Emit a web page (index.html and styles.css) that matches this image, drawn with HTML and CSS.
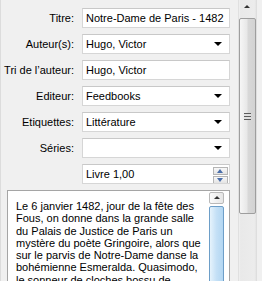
FILE: index.html
```html
<!DOCTYPE html>
<html lang="fr">
<head>
  <meta charset="UTF-8" />
  <title>Métadonnées du livre</title>
  <link rel="stylesheet" href="styles.css">
</head>
<body>
  <div class="window">
    <div class="panel">
      <div class="form">
        <label class="label">Titre:</label>
        <div class="field">Notre-Dame de Paris - 1482</div>

        <label class="label">Auteur(s):</label>
        <div class="field combo">Hugo, Victor<span class="arrow"></span></div>

        <label class="label">Tri de l’auteur:</label>
        <div class="field">Hugo, Victor</div>

        <label class="label">Editeur:</label>
        <div class="field combo">Feedbooks<span class="arrow"></span></div>

        <label class="label">Etiquettes:</label>
        <div class="field combo">Littérature<span class="arrow"></span></div>

        <label class="label">Séries:</label>
        <div class="field combo"><span class="arrow"></span></div>

        <span></span>
        <div class="field spin">Livre 1,00
          <div class="spin-buttons">
            <span class="spin-btn up"></span>
            <span class="spin-btn down"></span>
          </div>
        </div>
      </div>

      <div class="desc">
        <p class="desc-text">Le 6 janvier 1482, jour de la fête des<br>
          Fous, on donne dans la grande salle<br>
          du Palais de Justice de Paris un<br>
          mystère du poète Gringoire, alors que<br>
          sur le parvis de Notre-Dame danse la<br>
          bohémienne Esmeralda. Quasimodo,<br>
          le sonneur de cloches bossu de</p>
        <div class="mini-scroll">
          <span class="mini-up"></span>
          <span class="mini-thumb"></span>
        </div>
      </div>
    </div>

    <div class="vscroll">
      <div class="vs-up"></div>
      <div class="vs-thumb"><span class="grip"></span></div>
    </div>
  </div>
</body>
</html>
```

FILE: styles.css
```css
body {
  margin: 0;
  padding: 0;
  background-color: #f0f0f0;
  font-family: 'Liberation Sans', Arial, sans-serif;
  font-size: 11px;
  color: #000;
}

.window {
  display: flex;
  width: 262px;
  height: 281px;
  overflow: hidden;
}

.panel {
  width: 237px;
  border-left: 1px solid #dcdcdc;
  display: flex;
  flex-direction: column;
}

.form {
  display: grid;
  grid-template-columns: 73px 148px;
  grid-auto-rows: 20px;
  column-gap: 8px;
  row-gap: 6px;
  padding-top: 8px;
  align-items: center;
}

.label {
  text-align: right;
  white-space: nowrap;
}

.field {
  position: relative;
  height: 20px;
  box-sizing: border-box;
  background-color: #fff;
  border: 1px solid #d6d6d6;
  border-top-color: #c8c8c8;
  padding: 0 3px;
  line-height: 18px;
  white-space: nowrap;
  overflow: hidden;
}

.combo .arrow {
  position: absolute;
  right: 7px;
  top: 7px;
  width: 0;
  height: 0;
  border-left: 4px solid transparent;
  border-right: 4px solid transparent;
  border-top: 4px solid #000;
}

.spin-buttons {
  position: absolute;
  right: 1px;
  top: 2px;
  display: flex;
  flex-direction: column;
  gap: 1px;
}

.spin-btn {
  position: relative;
  width: 13px;
  height: 6px;
  border: 1px solid #b5b5b5;
  background: linear-gradient(#f8f8f8, #e4e4e4);
}

.spin-btn::after {
  content: "";
  position: absolute;
  left: 3px;
  width: 0;
  height: 0;
  border-left: 3px solid transparent;
  border-right: 3px solid transparent;
}

.spin-btn.up::after {
  top: 1px;
  border-bottom: 4px solid #4a6ea9;
}

.spin-btn.down::after {
  top: 1px;
  border-top: 4px solid #4a6ea9;
}

.desc {
  display: flex;
  margin: 6px 0 0 6px;
  width: 223px;
  flex: 1;
  box-sizing: border-box;
  background-color: #fff;
  border: 1px solid #a5a5a5;
  border-bottom: none;
}

.desc-text {
  flex: 1;
  margin: 0;
  padding: 9px 0 0 8px;
  font-size: 11px;
  line-height: 12.3px;
  white-space: nowrap;
  overflow: hidden;
}

.mini-scroll {
  width: 15px;
  margin: 1px 5px 0 0;
  display: flex;
  flex-direction: column;
  gap: 2px;
}

.mini-up {
  position: relative;
  height: 12px;
  box-sizing: border-box;
  border: 1px solid #b9b9b9;
  border-radius: 2px;
  background: linear-gradient(to right, #fbfbfb, #e6e6e6);
}

.mini-up::after {
  content: "";
  position: absolute;
  left: 4px;
  top: 3px;
  border-left: 3px solid transparent;
  border-right: 3px solid transparent;
  border-bottom: 3px solid #333;
}

.mini-thumb {
  flex: 1;
  border: 1px solid #6d9ec8;
  border-radius: 2px;
  background: linear-gradient(to right, #e6f3fc, #c4e0f6 50%, #b2d6f2);
}

.vscroll {
  width: 17px;
  display: flex;
  flex-direction: column;
  background: linear-gradient(to right, #f0f0f0, #e9e9e9 10%, #ececec 90%, #e4e4e4);
  border-left: 1px solid #e0e0e0;
  border-right: 1px solid #dedede;
}

.vs-up {
  position: relative;
  height: 18px;
}

.vs-up::after {
  content: "";
  position: absolute;
  left: 5px;
  top: 5px;
  border-left: 3px solid transparent;
  border-right: 3px solid transparent;
  border-bottom: 3px solid #333;
}

.vs-thumb {
  height: 196px;
  display: flex;
  align-items: center;
  justify-content: center;
  box-sizing: border-box;
  border: 1px solid #9e9e9e;
  border-radius: 2px;
  background: linear-gradient(to right, #f6f6f6, #e8e8e8 45%, #d8d8d8 55%, #d2d2d2);
}

.grip {
  width: 7px;
  height: 7px;
  background: repeating-linear-gradient(#5c5c5c 0, #5c5c5c 1px, #e0e0e0 1px, #e0e0e0 3px);
}
```
